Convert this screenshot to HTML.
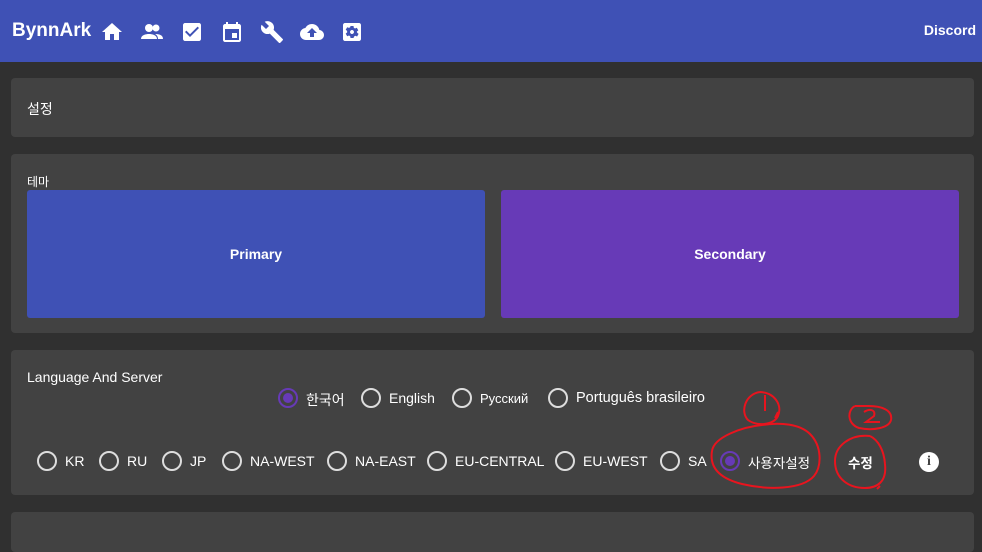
<!DOCTYPE html>
<html><head><meta charset="utf-8"><style>
*{margin:0;padding:0;box-sizing:border-box}
body{width:982px;height:532px;background:#303030;font-family:"Liberation Sans","Noto Sans CJK KR",sans-serif;color:#fff;position:relative;overflow:hidden}
.hdr{position:absolute;left:0;top:0;width:982px;height:62px;background:#3f51b5}
.card{position:absolute;left:11px;width:963px;background:#424242;border-radius:4px}
.t{position:absolute;font-size:14px;white-space:nowrap}
.r{position:absolute;width:20px;height:20px;border:2px solid #ddd;border-radius:50%}
.r.s{border-color:#673ab7}
.r.s::after{content:"";position:absolute;left:3px;top:3px;width:10px;height:10px;border-radius:50%;background:#673ab7}
.btn{position:absolute;top:190px;height:128px;border-radius:3px;display:flex;align-items:center;justify-content:center;font-weight:bold;font-size:14px}
</style></head><body>
<div class="hdr">
<div class="t" style="left:12px;top:20px;font-size:19px;font-weight:bold">BynnArk</div>
<svg style="position:absolute;left:100px;top:20px" width="265" height="24" fill="#fff">
<path d="M10 20v-6h4v6h5v-8h3L12 3 2 12h3v8z"/>
<g transform="translate(40,0)"><circle cx="9" cy="8" r="4"/><circle cx="16" cy="8" r="3.5"/><path d="M1 19c0-4 5-5 8-5s8 1 8 5zM18 19c0-2-1-4-3-5 4 0 8 1 8 5z"/></g>
<g transform="translate(80,0)"><path d="M19 3H5c-1 0-2 1-2 2v14c0 1 1 2 2 2h14c1 0 2-1 2-2V5c0-1-1-2-2-2zm-9 14l-5-5 1.4-1.4 3.6 3.6 7.6-7.6L19 8z"/></g>
<g transform="translate(120,0)"><path d="M19 4h-1V2h-2v2H8V2H6v2H5C4 4 3 5 3 6v14c0 1 1 2 2 2h14c1 0 2-1 2-2V6c0-1-1-2-2-2zm0 16H5V9h14zM12 13h5v5h-5z"/></g>
<g transform="translate(160,0)"><path d="M22.7 19l-9.1-9.1c.9-2.3.4-5-1.5-6.9-2-2-5-2.4-7.4-1.3L9 6 6 9 1.6 4.7C.4 7.1.9 10.1 2.9 12.1c1.9 1.9 4.6 2.4 6.9 1.5l9.1 9.1c.4.4 1 .4 1.4 0l2.3-2.3c.5-.4.5-1.1.1-1.4z"/></g>
<g transform="translate(200,0)"><path d="M19.4 10C18.7 6.6 15.7 4 12 4 9.1 4 6.6 5.6 5.4 8 2.3 8.4 0 10.9 0 14c0 3.3 2.7 6 6 6h13c2.8 0 5-2.2 5-5 0-2.6-2.1-4.8-4.6-5zM14 13v4h-4v-4H7l5-5 5 5z"/></g>
<g transform="translate(240,0)"><path d="M19 3H5c-1.1 0-2 .9-2 2v14c0 1.1.9 2 2 2h14c1.1 0 2-.9 2-2V5c0-1.1-.9-2-2-2zm-1.8 9c0 .2 0 .5-.1.7l1.5 1.2-1.5 2.6-1.8-.7c-.4.3-.8.5-1.2.7L13.5 18h-3l-.3-1.8c-.4-.2-.8-.4-1.2-.7l-1.8.7-1.5-2.6 1.5-1.2c0-.2-.1-.5-.1-.7s0-.5.1-.7L5.7 9.8l1.5-2.6 1.8.7c.4-.3.8-.5 1.2-.7L10.5 6h3l.3 1.8c.4.2.8.4 1.2.7l1.8-.7 1.5 2.6-1.5 1.2c.1.2.1.4.1.7zM12 10c-1.1 0-2 .9-2 2s.9 2 2 2 2-.9 2-2-.9-2-2-2z"/></g>
</svg>
<div class="t" style="right:6px;top:22px;font-weight:bold">Discord</div>
</div>
<div class="card" style="top:78px;height:59px"><div class="t" style="left:16px;top:21px">설정</div></div>
<div class="card" style="top:154px;height:179px"><div class="t" style="left:16px;top:19px;font-size:12px">테마</div></div>
<div class="btn" style="left:27px;width:458px;background:#3f51b5">Primary</div>
<div class="btn" style="left:501px;width:458px;background:#673ab7">Secondary</div>
<div class="card" style="top:350px;height:145px"><div class="t" style="left:16px;top:19px">Language And Server</div></div>
<div class="card" style="top:512px;height:40px"></div>

<div class="r s" style="left:278px;top:388px"></div><div class="t" style="left:306px;top:390px">한국어</div>
<div class="r" style="left:361px;top:388px"></div><div class="t" style="left:389px;top:390px">English</div>
<div class="r" style="left:452px;top:388px"></div><div class="t" style="left:480px;top:391px;font-size:13px">Русский</div>
<div class="r" style="left:548px;top:388px"></div><div class="t" style="left:576px;top:390px;font-size:14.5px">Português brasileiro</div>

<div class="r" style="left:37px;top:451px"></div><div class="t" style="left:65px;top:453px">KR</div>
<div class="r" style="left:99px;top:451px"></div><div class="t" style="left:127px;top:453px">RU</div>
<div class="r" style="left:162px;top:451px"></div><div class="t" style="left:190px;top:453px">JP</div>
<div class="r" style="left:222px;top:451px"></div><div class="t" style="left:250px;top:453px">NA-WEST</div>
<div class="r" style="left:327px;top:451px"></div><div class="t" style="left:355px;top:453px">NA-EAST</div>
<div class="r" style="left:427px;top:451px"></div><div class="t" style="left:455px;top:453px">EU-CENTRAL</div>
<div class="r" style="left:555px;top:451px"></div><div class="t" style="left:583px;top:453px">EU-WEST</div>
<div class="r" style="left:660px;top:451px"></div><div class="t" style="left:688px;top:453px">SA</div>
<div class="r s" style="left:720px;top:451px"></div><div class="t" style="left:748px;top:452px;font-size:13.5px">사용자설정</div>
<div class="t" style="left:848px;top:452px;font-size:13.5px;font-weight:bold">수정</div>
<div style="position:absolute;left:919px;top:452px;width:20px;height:20px;border-radius:50%;background:#fff;color:#424242;font-weight:bold;font-size:14px;text-align:center;line-height:20px;font-family:'Liberation Serif',serif">i</div>

<svg style="position:absolute;left:0;top:0" width="982" height="532" fill="none" stroke="#e8141e" stroke-width="2">
<path d="M760 392c-15 2-20 20-12 28 8 6 25 6 30-4 5-12-5-24-18-24"/>
<path d="M765 395v16M778 412l-3 6"/>
<path d="M762 425c-20 2-48 12-50 26-3 18 10 28 30 33 25 6 60 6 72-8 8-10 8-30-4-42-10-10-30-12-48-9"/>
<path d="M855 406c-8 4-8 18 4 22 14 3 30 0 32-8 2-10-10-14-22-14-8 0-12 0-14 0"/>
<path d="M864 412c6-4 12-2 10 4l-8 6h14"/>
<path d="M870 436c-20-2-35 10-35 25 0 18 14 27 30 27 12 0 22-6 20-24-1-14-7-24-15-28M880 486l-3 3"/>
</svg>
</body></html>
